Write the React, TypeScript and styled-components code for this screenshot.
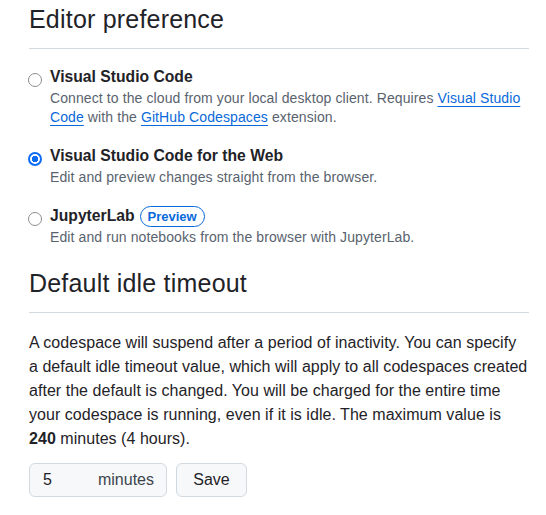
import React from 'react';
import styled, { createGlobalStyle } from 'styled-components';

const colors = {
  FG: '#1f2328',
  MUTED: '#59636e',
  BORDER: '#d1d9e0',
  LINK: '#0969da',
  ACCENT: '#0b6cf5',
  CONTROL_BG: '#f6f8fa',
  CONTROL_BORDER: '#d1d9e0',
};

const GlobalStyle = createGlobalStyle`
  body {
    margin: 0;
    background: #ffffff;
    color: ${colors.FG};
    font-family: 'Liberation Sans', Arial, sans-serif;
  }
`;

const Page = styled.div`
  width: 500px;
  padding: 0 17px 0 29px;
`;
const Subhead = styled.div<{ $spaced?: boolean }>`
  margin-top: ${({ $spaced }) => ($spaced ? '21px' : '4px')};
  padding-bottom: 14px;
  border-bottom: 1px solid ${colors.BORDER};
`;
const SubheadHeading = styled.h2`
  margin: 0;
  font-size: 25px;
  font-weight: 400;
  line-height: 30px;
  letter-spacing: 0.2px;
  color: ${colors.FG};
`;
const OptionList = styled.div`
  display: flex;
  flex-direction: column;
  gap: 18px;
  margin-top: 17px;
`;
const OptionRow = styled.label`
  display: grid;
  grid-template-columns: 14px 1fr;
  column-gap: 8px;
  align-items: start;
  margin-left: -1px;
`;
const Radio = styled.input`
  appearance: none;
  width: 14px;
  height: 14px;
  margin: 7px 0 0;
  border-radius: 50%;
  border: 1px solid #8d8d8d;
  background: #ffffff;
  box-sizing: border-box;
  &:checked {
    border: 2px solid ${colors.ACCENT};
    background: radial-gradient(
      circle,
      ${colors.ACCENT} 0 3px,
      #ffffff 3.5px
    );
  }
`;
const OptionBody = styled.div`
  display: flex;
  flex-direction: column;
  gap: 1px;
`;
const OptionTitle = styled.div`
  display: flex;
  align-items: center;
  font-size: 15.7px;
  font-weight: 700;
  line-height: 22px;
  color: ${colors.FG};
`;
const Badge = styled.span`
  margin-left: 5px;
  padding: 0 7px;
  border: 1px solid ${colors.LINK};
  border-radius: 999px;
  font-size: 13px;
  font-weight: 700;
  line-height: 19px;
  color: ${colors.LINK};
`;
const OptionNote = styled.div`
  font-size: 14px;
  line-height: 19px;
  letter-spacing: 0.1px;
  color: ${colors.MUTED};
`;
const Link = styled.a`
  color: ${colors.LINK};
  text-decoration: underline;
  text-underline-offset: 3px;
`;
const Paragraph = styled.p`
  margin: 18px 0 0;
  font-size: 16px;
  line-height: 24px;
  letter-spacing: 0.04px;
  color: ${colors.FG};
  strong {
    font-weight: 700;
  }
`;
const FormRow = styled.div`
  display: flex;
  gap: 9px;
  margin-top: 12px;
`;
const InputGroup = styled.div`
  display: flex;
  align-items: center;
  box-sizing: border-box;
  width: 138px;
  height: 34px;
  padding: 0 12px 0 13px;
  border: 1px solid ${colors.CONTROL_BORDER};
  border-radius: 6px;
  background: ${colors.CONTROL_BG};
`;
const NumberInput = styled.input`
  flex: 1;
  min-width: 0;
  padding: 0;
  border: 0;
  outline: none;
  background: transparent;
  font-family: inherit;
  font-size: 16px;
  color: ${colors.FG};
`;
const InputSuffix = styled.span`
  font-size: 16px;
  color: #3d444d;
`;
const Button = styled.button`
  box-sizing: border-box;
  width: 71px;
  height: 34px;
  padding: 0;
  border: 1px solid ${colors.CONTROL_BORDER};
  border-radius: 6px;
  background: ${colors.CONTROL_BG};
  font-family: inherit;
  font-size: 16px;
  font-weight: 500;
  color: ${colors.FG};
`;

interface EditorOption {
  id: string;
  title: string;
  badge?: string;
  description: React.ReactNode;
}

const editorOptions: EditorOption[] = [
  {
    id: 'vscode',
    title: 'Visual Studio Code',
    description: (
      <>
        Connect to the cloud from your local desktop client. Requires{' '}
        <Link href="#">Visual Studio Code</Link> with the{' '}
        <Link href="#">GitHub Codespaces</Link> extension.
      </>
    ),
  },
  {
    id: 'vscode-web',
    title: 'Visual Studio Code for the Web',
    description: 'Edit and preview changes straight from the browser.',
  },
  {
    id: 'jupyter',
    title: 'JupyterLab',
    badge: 'Preview',
    description: 'Edit and run notebooks from the browser with JupyterLab.',
  },
];

const App: React.FC = () => {
  const [editor, setEditor] = React.useState('vscode-web');
  const [timeout, setTimeoutValue] = React.useState('5');

  return (
    <Page>
      <GlobalStyle />
      <Subhead>
        <SubheadHeading>Editor preference</SubheadHeading>
      </Subhead>
      <OptionList>
        {editorOptions.map((option) => (
          <OptionRow key={option.id}>
            <Radio
              type="radio"
              name="editor"
              checked={editor === option.id}
              onChange={() => setEditor(option.id)}
            />
            <OptionBody>
              <OptionTitle>
                {option.title}
                {option.badge && <Badge>{option.badge}</Badge>}
              </OptionTitle>
              <OptionNote>{option.description}</OptionNote>
            </OptionBody>
          </OptionRow>
        ))}
      </OptionList>

      <Subhead $spaced>
        <SubheadHeading>Default idle timeout</SubheadHeading>
      </Subhead>
      <Paragraph>
        A codespace will suspend after a period of inactivity. You can specify
        a default idle timeout value, which will apply to all codespaces created
        after the default is changed. You will be charged for the entire time
        your codespace is running, even if it is idle. The maximum value is{' '}
        <strong>240</strong> minutes (4 hours).
      </Paragraph>
      <FormRow>
        <InputGroup>
          <NumberInput
            value={timeout}
            onChange={(e) => setTimeoutValue(e.target.value)}
          />
          <InputSuffix>minutes</InputSuffix>
        </InputGroup>
        <Button type="button">Save</Button>
      </FormRow>
    </Page>
  );
};
export default App;
